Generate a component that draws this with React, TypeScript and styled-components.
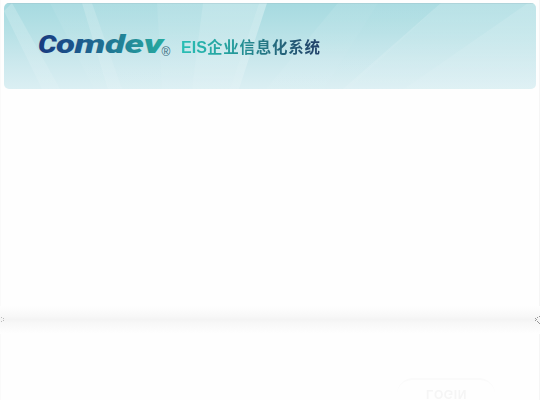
import React from 'react';
import styled, { createGlobalStyle } from 'styled-components';

const GlobalStyle = createGlobalStyle`
  body { margin: 0; background: #fff; }
`;

const Page = styled.main`
  position: relative;
  box-sizing: border-box;
  width: 540px;
  height: 400px;
  padding: 3px 4px 0;
  overflow: hidden;
  display: flex;
  flex-direction: column;
  background: #fefefe;
  box-shadow: inset 1px 0 #fafafa, inset -1px 0 #f5f5f5;
`;

const Banner = styled.header`
  position: relative;
  flex: none;
  height: 86px;
  border-radius: 5px;
  overflow: hidden;
  background: linear-gradient(#a6dae0, #b7e1e6 35%, #cbe8ed 68%, #dbeff3);
`;

const Rays = styled.svg`
  position: absolute;
  inset: 0;
`;

const Brand = styled.div`
  position: relative;
  display: flex;
  padding: 27px 0 0 32px;
`;

const Logo = styled.svg`
  flex: none;
  overflow: visible;
`;

const Title = styled.h1`
  margin: 8px 0 0 9px;
  font: 700 15.5px/20px 'Liberation Sans', 'Noto Sans CJK SC', sans-serif;
  letter-spacing: 0.75px;
  white-space: nowrap;
  color: transparent;
  background: linear-gradient(90deg, #29bfb5, #249e9d 35%, #256e80 65%, #223f68);
  background-clip: text;
`;

const Latin = styled.span`
  font-size: 16px;
  letter-spacing: 0.1px;
`;

const Divider = styled.div`
  flex: none;
  height: 28px;
  margin: 217px -4px 0;
  display: flex;
  align-items: center;
  justify-content: space-between;
  background: linear-gradient(#fefefe, #f8f8f8 35%, #f4f4f4 48%, #f8f8f8 62%, #fefefe);
`;

const Notch = styled.svg<{ $faint?: boolean }>`
  flex: none;
  opacity: ${({ $faint }) => ($faint ? 0.45 : 0.85)};
`;

const LoginReflection = styled.div`
  flex: none;
  align-self: flex-start;
  box-sizing: border-box;
  width: 98px;
  height: 22px;
  margin: 44px 0 0 393px;
  border-top: 2px solid #fafafa;
  border-radius: 16px 16px 0 0;
  text-align: center;
`;

const LoginText = styled.span`
  display: block;
  margin: 7px 0 0 1px;
  transform: scaleY(-1);
  color: #f5f5f5;
  font: 700 12px/13px 'Liberation Sans', sans-serif;
  letter-spacing: 0.6px;
`;

const rays = [
  { points: '0,8 8,0 56,86 38,86', opacity: 0.2 },
  { points: '46,0 78,0 105,86 90,86', opacity: 0.07 },
  { points: '78,0 88,0 118,86 104,86', opacity: 0.24 },
  { points: '88,0 153,0 158,86 118,86', opacity: 0.08 },
  { points: '153,0 199,0 188,86 158,86', opacity: 0.16 },
  { points: '199,0 255,0 226,86 188,86', opacity: 0.28 },
  { points: '255,0 263,0 235,86 226,86', opacity: 0.36 },
  { points: '334,0 374,0 320,86 262,86', opacity: 0.09 },
  { points: '374,0 437,0 345,86 320,86', opacity: 0.06 },
  { points: '437,0 524,0 400,86 339,86', opacity: 0.2 },
  { points: '524,0 532,0 532,86 400,86', opacity: 0.3 },
];

const letters = [
  { char: 'C', x: 2, width: 18.6 },
  { char: 'o', x: 20, width: 19 },
  { char: 'm', x: 38.5, width: 31 },
  { char: 'd', x: 69, width: 20 },
  { char: 'e', x: 88.5, width: 19.5 },
  { char: 'v', x: 107.5, width: 20 },
];

export default function App() {
  return (
    <>
      <GlobalStyle />
      <Page>
        <Banner>
          <Rays width="532" height="86">
            <defs>
              <linearGradient id="ray" x2="0" y2="1">
                <stop stopColor="#fff" />
                <stop offset="1" stopColor="#fff" stopOpacity=".4" />
              </linearGradient>
            </defs>
            {rays.map((ray) => (
              <polygon key={ray.points} points={ray.points} fill="url(#ray)" opacity={ray.opacity} />
            ))}
            <path d="M0 .5H532" stroke="#9dbec6" opacity=".35" />
          </Rays>
          <Brand>
            <Logo width="136" height="28">
              <defs>
                <linearGradient id="brand" gradientUnits="userSpaceOnUse" x1="2" x2="128">
                  <stop stopColor="#173a80" />
                  <stop offset=".35" stopColor="#1c5b8d" />
                  <stop offset=".68" stopColor="#218497" />
                  <stop offset="1" stopColor="#26aaa0" />
                </linearGradient>
              </defs>
              <text
                y="23"
                fontFamily="Roboto, sans-serif"
                fontSize="25"
                fontWeight="900"
                fontStyle="italic"
                fill="url(#brand)"
              >
                {letters.map(({ char, x, width }) => (
                  <tspan key={char} x={x} textLength={width} lengthAdjust="spacingAndGlyphs">
                    {char}
                  </tspan>
                ))}
              </text>
              <text x="125.5" y="25.5" fontFamily="'Liberation Sans', sans-serif" fontSize="12" fill="#356b7d">
                ®
              </text>
            </Logo>
            <Title>
              <Latin>EIS</Latin>企业信息化系统
            </Title>
          </Brand>
        </Banner>
        <Divider>
          <Notch $faint width="5" height="8" fill="#777">
            <path d="M1 1h1v1H1zM3 2h1v1H3zM3 4h1v1H3zM1 5h1v1H1z" />
          </Notch>
          <Notch width="5" height="8" fill="#888" shapeRendering="crispEdges">
            <path d="M4 0h1v1H4zM2 1h1v1H2zM1 3h1v1H1zM0 2h1v1H0zM0 4h1v1H0zM2 5h1v1H2zM3 6h1v1H3zM4 7h1v1H4z" />
          </Notch>
        </Divider>
        <LoginReflection>
          <LoginText>LOGIN</LoginText>
        </LoginReflection>
      </Page>
    </>
  );
}
